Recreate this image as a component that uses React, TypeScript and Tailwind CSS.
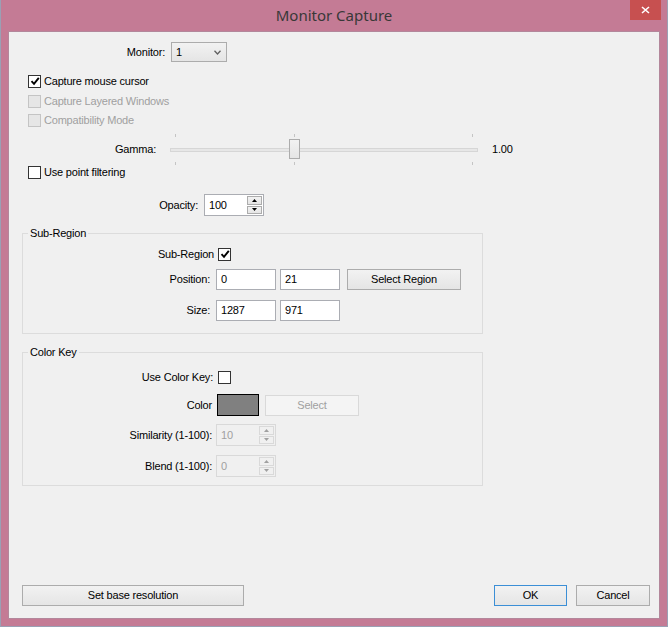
import clsx from 'clsx';

function Check({ checked, disabled }: { checked?: boolean; disabled?: boolean }) {
  return (
    <span
      className={clsx(
        'flex h-[13px] w-[13px] shrink-0 items-center justify-center border',
        disabled ? 'border-[#c4c4c4] bg-[#e6e6e6]' : 'border-[#333333] bg-white'
      )}
    >
      {checked && (
        <svg width="10" height="10" viewBox="0 0 10 10">
          <path d="M1.5 5.2 L4 7.8 L8.8 1.8" stroke="#000" strokeWidth="1.9" fill="none" />
        </svg>
      )}
    </span>
  );
}

function CheckRow({ label, checked, disabled, h }: { label: string; checked?: boolean; disabled?: boolean; h: string }) {
  return (
    <div className={clsx('ml-[6px] flex items-center gap-[3px]', h)}>
      <Check checked={checked} disabled={disabled} />
      <span className={disabled ? 'text-[#a0a0a0]' : 'text-black'}>{label}</span>
    </div>
  );
}

function Arrow({ up, disabled }: { up?: boolean; disabled?: boolean }) {
  return (
    <div
      className={clsx(
        'flex h-[9px] w-[15px] items-center justify-center border',
        disabled ? 'border-[#d9d9d9] bg-[#f0f0f0]' : 'border-[#acacac] bg-gradient-to-b from-[#f2f2f2] to-[#e5e5e5]'
      )}
    >
      <svg width="5" height="3" viewBox="0 0 5 3">
        <path d={up ? 'M0 3 L2.5 0 L5 3 Z' : 'M0 0 L2.5 3 L5 0 Z'} fill={disabled ? '#a0a0a0' : '#000'} />
      </svg>
    </div>
  );
}

function Spin({ value, disabled }: { value: string; disabled?: boolean }) {
  return (
    <div
      className={clsx(
        'flex h-[22px] w-[60px] border',
        disabled ? 'border-[#d9d9d9] bg-[#f0f0f0] text-[#a0a0a0]' : 'border-[#abadb3] bg-white text-black'
      )}
    >
      <div className="flex flex-1 items-center pl-[4px]">{value}</div>
      <div className="flex flex-col gap-[1px] py-[1px] pr-[1px]">
        <Arrow up disabled={disabled} />
        <Arrow disabled={disabled} />
      </div>
    </div>
  );
}

function Field({ value }: { value: string }) {
  return (
    <div className="flex h-[21px] w-[60px] items-center border border-[#abadb3] bg-white pl-[4px]">{value}</div>
  );
}

function Button({ label, w, primary, disabled }: { label: string; w: string; primary?: boolean; disabled?: boolean }) {
  return (
    <button
      className={clsx(
        'flex h-[21px] items-center justify-center border',
        w,
        primary
          ? 'border-[#3c8fd6] bg-gradient-to-b from-[#f2f2f2] to-[#e5e5e5] text-black'
          : disabled
            ? 'border-[#d9d9d9] bg-[#f4f4f4] text-[#a0a0a0]'
            : 'border-[#acacac] bg-gradient-to-b from-[#f2f2f2] to-[#e5e5e5] text-black'
      )}
    >
      {label}
    </button>
  );
}

function Slider() {
  const ticks = [5, 124, 302];
  return (
    <div className="relative h-[32px] w-[308px]">
      {ticks.map((x) => (
        <div key={'t' + x}>
          <div className="absolute top-[1px] h-[3px] w-px bg-[#c4c4c4]" style={{ left: x }} />
          <div className="absolute top-[29px] h-[3px] w-px bg-[#c4c4c4]" style={{ left: x }} />
        </div>
      ))}
      <div className="absolute left-0 right-0 top-[15px] h-[4px] border border-[#d6d6d6] bg-[#e7e7e7]" />
      <div className="absolute left-[119px] top-[6px] h-[20px] w-[11px] border border-[#acacac] bg-gradient-to-b from-[#f2f2f2] to-[#e5e5e5]" />
    </div>
  );
}

export default function App() {
  return (
    <div className="flex h-[627px] w-[668px] flex-col border-x border-b border-[#9aa0b4] bg-[#c47b95] font-['Liberation_Sans',Arial,sans-serif] text-[11px] tracking-[-0.2px] text-black">
      <div className="relative flex h-[31px] shrink-0 items-center justify-center">
        <span className="font-['Noto_Sans',sans-serif] text-[15px] tracking-normal text-[#383838]">Monitor Capture</span>
        <div className="absolute right-[6px] top-0 flex h-[20px] w-[31px] items-center justify-center bg-[#c75050]">
          <svg width="9" height="8" viewBox="0 0 9 8">
            <path d="M1 1 L8 7 M8 1 L1 7" stroke="#fff" strokeWidth="1.6" />
          </svg>
        </div>
      </div>

      <div className="mx-[7px] flex h-[588px] flex-col border border-[#b3879b] bg-[#f0f0f0] pl-[13px] pr-[9px]">
        {/* Monitor */}
        <div className="mt-[10px] flex h-[20px] items-center">
          <span className="w-[143px] text-right">Monitor:</span>
          <div className="ml-[6px] flex h-[20px] w-[56px] items-center justify-between border border-[#acacac] bg-gradient-to-b from-[#f2f2f2] to-[#e5e5e5] pl-[4px] pr-[5px]">
            <span>1</span>
            <svg width="7" height="5" viewBox="0 0 7 5">
              <path d="M0.5 0.8 L3.5 4 L6.5 0.8" stroke="#606060" strokeWidth="1.3" fill="none" />
            </svg>
          </div>
        </div>

        <div className="mt-[9px]">
          <CheckRow label="Capture mouse cursor" checked h="h-[20px]" />
          <CheckRow label="Capture Layered Windows" disabled h="h-[20px]" />
          <CheckRow label="Compatibility Mode" disabled h="h-[19px]" />
        </div>

        {/* Gamma */}
        <div className="mt-[3px] flex h-[32px] items-center">
          <span className="w-[134px] text-right">Gamma:</span>
          <div className="ml-[14px]">
            <Slider />
          </div>
          <span className="ml-[14px]">1.00</span>
        </div>

        <CheckRow label="Use point filtering" h="h-[14px]" />

        {/* Opacity */}
        <div className="mt-[15px] flex h-[22px] items-center">
          <span className="w-[176px] text-right">Opacity:</span>
          <div className="ml-[6px]">
            <Spin value="100" />
          </div>
        </div>

        {/* Sub-Region */}
        <fieldset className="mt-[11px] w-[461px] border border-[#dcdcdc] pb-[12px]">
          <legend className="ml-[5px] px-[2px] leading-[13px]">Sub-Region</legend>
          <div className="mt-[7px] flex h-[14px] items-center">
            <span className="w-[191px] text-right">Sub-Region</span>
            <div className="ml-[4px]">
              <Check checked />
            </div>
          </div>
          <div className="mt-[8px] flex h-[21px] items-center">
            <span className="w-[187px] text-right">Position:</span>
            <div className="ml-[6px] flex items-center gap-[4px]">
              <Field value="0" />
              <Field value="21" />
            </div>
            <div className="ml-[7px]">
              <Button label="Select Region" w="w-[114px]" />
            </div>
          </div>
          <div className="mt-[10px] flex h-[21px] items-center">
            <span className="w-[187px] text-right">Size:</span>
            <div className="ml-[6px] flex items-center gap-[4px]">
              <Field value="1287" />
              <Field value="971" />
            </div>
          </div>
        </fieldset>

        {/* Color Key */}
        <fieldset className="mt-[12px] w-[461px] border border-[#dcdcdc] pb-[8px]">
          <legend className="ml-[5px] px-[2px] leading-[13px]">Color Key</legend>
          <div className="mt-[11px] flex h-[14px] items-center">
            <span className="w-[190px] text-right">Use Color Key:</span>
            <div className="ml-[5px]">
              <Check />
            </div>
          </div>
          <div className="mt-[10px] flex h-[22px] items-center">
            <span className="w-[189px] text-right">Color</span>
            <div className="ml-[5px] h-[22px] w-[42px] border border-black bg-[#808080]" />
            <div className="ml-[6px]">
              <Button label="Select" w="w-[94px]" disabled />
            </div>
          </div>
          <div className="mt-[8px] flex h-[22px] items-center">
            <span className="w-[189px] text-right">Similarity (1-100):</span>
            <div className="ml-[4px]">
              <Spin value="10" disabled />
            </div>
          </div>
          <div className="mt-[9px] flex h-[22px] items-center">
            <span className="w-[189px] text-right">Blend (1-100):</span>
            <div className="ml-[4px]">
              <Spin value="0" disabled />
            </div>
          </div>
        </fieldset>

        {/* Bottom buttons */}
        <div className="mt-auto mb-[12px] flex items-center">
          <Button label="Set base resolution" w="w-[222px]" />
          <div className="ml-auto flex gap-[9px]">
            <Button label="OK" w="w-[73px]" primary />
            <Button label="Cancel" w="w-[74px]" />
          </div>
        </div>
      </div>
    </div>
  );
}
